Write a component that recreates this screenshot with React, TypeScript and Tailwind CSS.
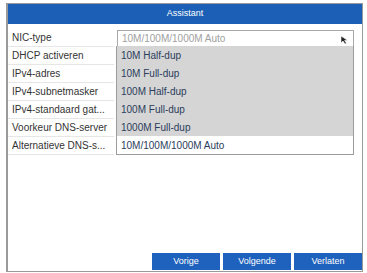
import React from "react";

const labels = [
  "NIC-type",
  "DHCP activeren",
  "IPv4-adres",
  "IPv4-subnetmasker",
  "IPv4-standaard gat...",
  "Voorkeur DNS-server",
  "Alternatieve DNS-s...",
];

const options = [
  "10M Half-dup",
  "10M Full-dup",
  "100M Half-dup",
  "100M Full-dup",
  "1000M Full-dup",
  "10M/100M/1000M Auto",
];

function Cursor() {
  return (
    <svg width="9" height="10" viewBox="0 0 9 10" className="absolute right-[4px] top-[4px]">
      <path d="M1 1 L1 8 L3 6 L5 9 L6.5 8.3 L4.6 5.4 L7.5 5.2 Z" fill="#222" stroke="#fff" strokeWidth="0.6" />
    </svg>
  );
}

export default function App() {
  return (
    <div
      className="w-[367px] h-[273px] bg-white pt-[3px] pl-[6px] overflow-hidden"
      style={{ fontFamily: '"Liberation Sans", Arial, sans-serif' }}
    >
      <div className="relative w-[357px] h-[269px] border border-[#9a9a9a] border-l-2 bg-white flex flex-col">
        <div className="h-[20px] bg-[#1c5fb6] flex items-center justify-center text-white text-[9px]">
          Assistant
        </div>

        <div className="mt-[5px] flex flex-col">
          {labels.map((label, i) => (
            <div key={label} className="h-[18px] flex items-center">
              <div className="w-[106px] h-full border-b border-[#e6e6e6] flex items-center pl-[4px] text-[10px] text-[#333] whitespace-nowrap overflow-hidden">
                {label}
              </div>
              {i === 0 ? (
                <div className="relative ml-[3px] w-[237px] h-[17px] border border-[#a8a8a8] bg-white flex items-center pl-[4px] text-[10px] text-[#a0a0a0]">
                  10M/100M/1000M Auto
                  <Cursor />
                </div>
              ) : (
                <div className="ml-[3px] w-[237px] h-full" />
              )}
            </div>
          ))}
        </div>

        <div className="absolute left-[108px] top-[42px] w-[238px] border border-[#9c9c9c] border-t-0 bg-[#d5d5d5] flex flex-col">
          {options.map((opt, i) => (
            <div
              key={opt}
              className={`h-[18px] flex items-center pl-[4px] text-[10px] text-[#2b3d5c] ${
                i === options.length - 1 ? "bg-white" : ""
              }`}
            >
              {opt}
            </div>
          ))}
        </div>

        <div className="mt-auto flex justify-end gap-[3px] mb-[1px]">
          {["Vorige", "Volgende", "Verlaten"].map((b) => (
            <button
              key={b}
              className="w-[68px] h-[17px] bg-[#1f62bd] text-white text-[9px] flex items-center justify-center"
            >
              {b}
            </button>
          ))}
        </div>
      </div>
    </div>
  );
}
